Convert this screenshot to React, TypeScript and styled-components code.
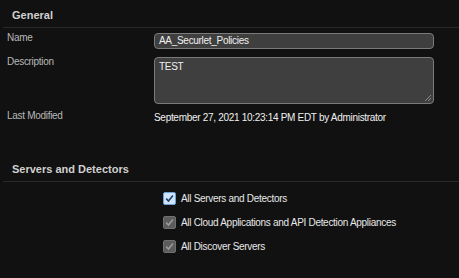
import styled, { createGlobalStyle } from 'styled-components';

const Global = createGlobalStyle`
  html, body {
    margin: 0;
    padding: 0;
    background: #111111;
  }
  body {
    font-family: "Liberation Sans", Arial, sans-serif;
  }
`;

const Page = styled.div`
  width: 459px;
  height: 278px;
  background: #111111;
  color: #e6e6e6;
  font-size: 10px;
  letter-spacing: -0.3px;
  overflow: hidden;
  white-space: nowrap;
`;

const SectionTitle = styled.h2<{ $top: number }>`
  margin: ${(p) => p.$top}px 0 0 3px;
  padding: 0 0 4px 9px;
  font-size: 11px;
  font-weight: bold;
  letter-spacing: 0;
  color: #d0d0d0;
  border-bottom: 1px solid #262a2c;
  line-height: 15px;
`;

const Row = styled.div<{ $mt: number }>`
  display: grid;
  grid-template-columns: 154px 280px;
  margin-top: ${(p) => p.$mt}px;
  align-items: start;
`;

const Label = styled.div`
  padding-left: 7px;
  color: #b8b8b8;
  line-height: 10px;
`;

const Input = styled.div`
  height: 14px;
  border: 1px solid #7a7a7a;
  border-radius: 4px;
  background: #3f3f3f;
  padding: 0 4px;
  line-height: 14px;
  color: #f0f0f0;
`;

const TextArea = styled.div`
  position: relative;
  border: 1px solid #7a7a7a;
  border-radius: 4px;
  background: #3f3f3f;
  padding: 2px 4px;
  box-sizing: border-box;
  height: 47px;
  line-height: 14px;
  color: #f0f0f0;
`;

const Grip = styled.svg`
  position: absolute;
  right: 2px;
  bottom: 2px;
`;

const Value = styled.div`
  line-height: 14px;
  color: #f0f0f0;
`;

const CheckList = styled.div`
  display: flex;
  flex-direction: column;
  gap: 11px;
  margin-top: 10px;
  padding-left: 163px;
`;

const CheckRow = styled.label`
  display: flex;
  align-items: center;
  gap: 5px;
  line-height: 13px;
  color: #e8e8e8;
`;

const Box = styled.span<{ $active?: boolean }>`
  width: 13px;
  height: 13px;
  box-sizing: border-box;
  border-radius: 2px;
  display: flex;
  align-items: center;
  justify-content: center;
  background: ${(p) => (p.$active ? '#cfe3fb' : '#5c5c5c')};
  border: 1px solid ${(p) => (p.$active ? '#6d9fd8' : '#707070')};
`;

function Check({ active }: { active?: boolean }) {
  return (
    <Box $active={active}>
      <svg width="9" height="9" viewBox="0 0 9 9">
        <path
          d="M1.2 4.6 L3.5 7 L7.9 1.6"
          fill="none"
          stroke={active ? '#1f3f66' : '#9a9a9a'}
          strokeWidth="1.6"
        />
      </svg>
    </Box>
  );
}

export default function App() {
  return (
    <Page>
      <Global />
      <SectionTitle $top={8}>General</SectionTitle>
      <Row $mt={5}>
        <Label>Name</Label>
        <Input>AA_Securlet_Policies</Input>
      </Row>
      <Row $mt={8}>
        <Label>Description</Label>
        <TextArea>
          TEST
          <Grip width="6" height="6" viewBox="0 0 6 6">
            <path d="M6 0 L0 6 M6 3 L3 6" stroke="#8a8a8a" strokeWidth="1" />
          </Grip>
        </TextArea>
      </Row>
      <Row $mt={7}>
        <Label>Last Modified</Label>
        <Value>September 27, 2021 10:23:14 PM EDT by Administrator</Value>
      </Row>
      <SectionTitle $top={37}>Servers and Detectors</SectionTitle>
      <CheckList>
        <CheckRow>
          <Check active />
          All Servers and Detectors
        </CheckRow>
        <CheckRow>
          <Check />
          All Cloud Applications and API Detection Appliances
        </CheckRow>
        <CheckRow>
          <Check />
          All Discover Servers
        </CheckRow>
      </CheckList>
    </Page>
  );
}
